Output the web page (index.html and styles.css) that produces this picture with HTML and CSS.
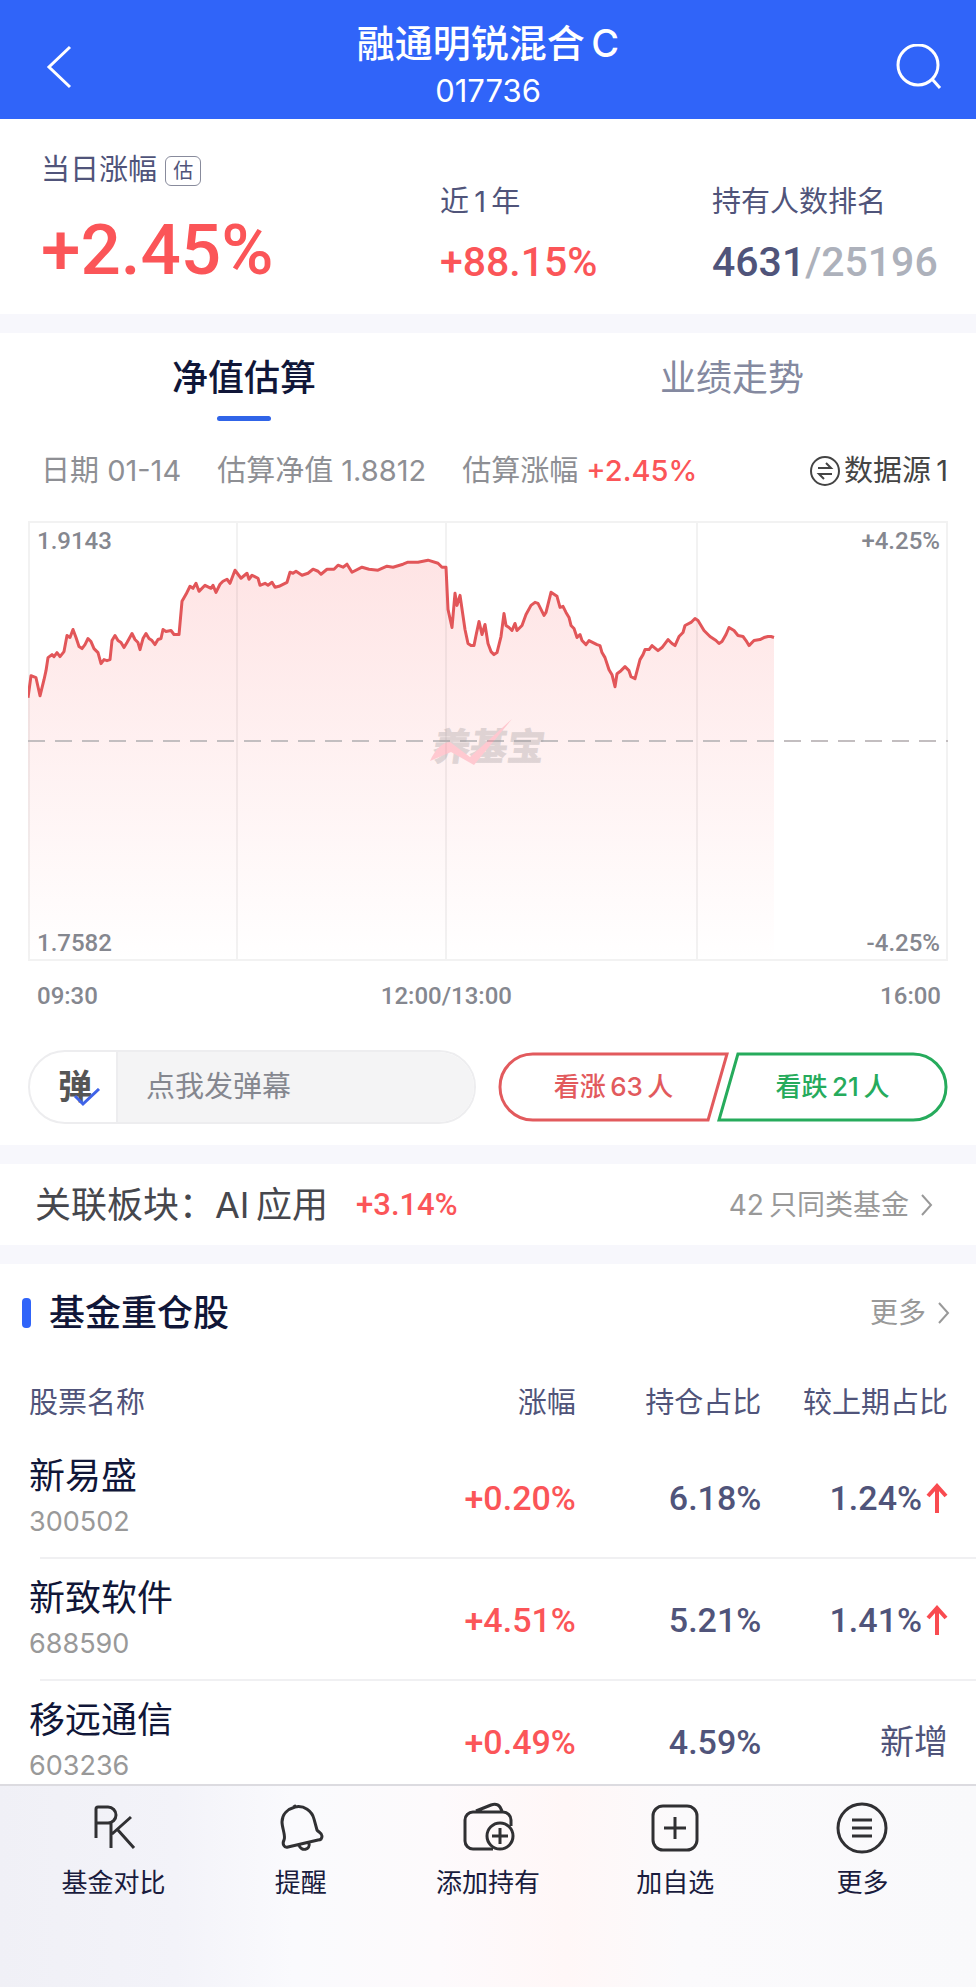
FILE: index.html
```
<!DOCTYPE html>
<html lang="zh-CN">
<head>
<meta charset="utf-8">
<meta name="viewport" content="width=device-width, initial-scale=1">
<title>融通明锐混合C</title>
<link rel="stylesheet" href="styles.css">
</head>
<body>

<header class="topbar">
  <button class="icon-btn back" aria-label="返回">
    <svg width="28" height="44" viewBox="0 0 28 44"><path d="M24 2 L3 22 L24 42"/></svg>
  </button>
  <div class="title">
    <h1>融通明锐混合&thinsp;C</h1>
    <p>017736</p>
  </div>
  <button class="icon-btn" aria-label="搜索">
    <svg width="46" height="46" viewBox="0 0 46 46"><circle cx="22" cy="21" r="20"/><path d="M36 35 L44 44"/></svg>
  </button>
</header>

<main>
<section class="stats">
  <div class="stat">
    <p class="label">当日涨幅 <span class="badge">估</span></p>
    <p class="num big up">+2.45%</p>
  </div>
  <div class="stat">
    <p class="label">近&thinsp;1&thinsp;年</p>
    <p class="num up">+88.15%</p>
  </div>
  <div class="stat">
    <p class="label">持有人数排名</p>
    <p class="num rank">4631<span>/25196</span></p>
  </div>
</section>

<section class="estimate">
  <nav class="tabs">
    <button class="tab active">净值估算</button>
    <button class="tab">业绩走势</button>
  </nav>

  <div class="info">
    <span>日期 01-14</span>
    <span>估算净值 1.8812</span>
    <span>估算涨幅 <b class="up">+2.45%</b></span>
    <button class="source">
      <svg width="32" height="32" viewBox="0 0 32 32"><circle cx="16" cy="16" r="14"/><path d="M9 13 H22 L17 8 M23 19 H10 L15 24"/></svg>数据源&thinsp;1
    </button>
  </div>

  <div class="chart">
    <svg class="plot" viewBox="0 0 920 438" preserveAspectRatio="none">
      <defs>
        <linearGradient id="fade" x1="0" y1="0" x2="0" y2="1">
          <stop offset="0" stop-color="#fb5558" stop-opacity=".16"/>
          <stop offset="1" stop-color="#fb5558" stop-opacity="0"/>
        </linearGradient>
      </defs>
      <path class="area" id="area" fill="url(#fade)"/>
      <path class="grid" d="M1 1 H919 V437 H1 Z M209 1 V437 M418 1 V437 M669 1 V437"/>
      <path class="zero" d="M0 219 H920"/>
      <path class="line" id="line"/>
    </svg>
    <svg class="mark" width="126" height="56" viewBox="0 0 126 56">
      <text x="10" y="45" transform="skewX(-8)">养基宝</text>
      <path d="M2 46 Q10 28 22 27 L42 42 L84 4 L46 50 L23 37 Z"/>
    </svg>
    <span class="num tl">1.9143</span>
    <span class="num tr">+4.25%</span>
    <span class="num bl">1.7582</span>
    <span class="num br">-4.25%</span>
  </div>
  <div class="times num">
    <span>09:30</span><span>12:00/13:00</span><span>16:00</span>
  </div>

  <div class="actions">
    <div class="danmu">
      <button class="danmu-btn" aria-label="弹幕开关">弹<svg width="28" height="20" viewBox="0 0 28 20"><path d="M2 8 L10 16 L26 1"/></svg></button>
      <input type="text" aria-label="发弹幕" placeholder="点我发弹幕">
    </div>
    <div class="vote">
      <button class="vote-up">
        <svg viewBox="0 0 232 70" preserveAspectRatio="none"><path d="M35 2 H230 L211 68 H35 A33 33 0 0 1 35 2 Z"/></svg>
        <span>看涨&thinsp;63&thinsp;人</span>
      </button>
      <button class="vote-down">
        <svg viewBox="0 0 232 70" preserveAspectRatio="none"><path d="M21 2 H197 A33 33 0 0 1 197 68 H2 Z"/></svg>
        <span>看跌&thinsp;21&thinsp;人</span>
      </button>
    </div>
  </div>
</section>

<section class="related">
  <h2>关联板块：<span>AI&thinsp;应用</span></h2>
  <span class="num up">+3.14%</span>
  <a class="more" href="#">42&thinsp;只同类基金<svg width="12" height="24" viewBox="0 0 12 24"><path d="M1 2 L10 12 L1 22"/></svg></a>
</section>

<section class="holdings">
  <div class="holdings-head">
    <h2>基金重仓股</h2>
    <a class="more" href="#">更多<svg width="12" height="24" viewBox="0 0 12 24"><path d="M1 2 L10 12 L1 22"/></svg></a>
  </div>
  <table>
    <thead>
      <tr><th>股票名称</th><th>涨幅</th><th>持仓占比</th><th>较上期占比</th></tr>
    </thead>
    <tbody>
      <tr>
        <td><p class="name">新易盛</p><p class="code">300502</p></td>
        <td class="num up">+0.20%</td>
        <td class="num">6.18%</td>
        <td class="num">1.24%<svg class="arrow" width="22" height="30" viewBox="0 0 22 30"><path d="M11 30 V3 M2 13 L11 3 L20 13"/></svg></td>
      </tr>
      <tr>
        <td><p class="name">新致软件</p><p class="code">688590</p></td>
        <td class="num up">+4.51%</td>
        <td class="num">5.21%</td>
        <td class="num">1.41%<svg class="arrow" width="22" height="30" viewBox="0 0 22 30"><path d="M11 30 V3 M2 13 L11 3 L20 13"/></svg></td>
      </tr>
      <tr>
        <td><p class="name">移远通信</p><p class="code">603236</p></td>
        <td class="num up">+0.49%</td>
        <td class="num">4.59%</td>
        <td class="new">新增</td>
      </tr>
    </tbody>
  </table>
</section>
</main>

<nav class="bottombar">
  <a href="#">
    <svg width="52" height="52" viewBox="0 0 52 52"><path d="M8 36 V7 Q8 5 10 5 H20 A8 8 0 0 1 20 21 H8 M23 21 V46 M43 15 L24 32 M29 27 L46 46"/></svg>
    基金对比
  </a>
  <a href="#">
    <svg width="52" height="52" viewBox="0 0 52 52"><path d="M9 38 C11 34 7 26 7 20 C7 12 13 7 20 5 C29 3 37 9 39 17 L42 28 C43 30 47 31 47 34 C47 37 45 38 43 38 L13 45 C9 46 7 42 9 38 Z M24 43 C26 50 36 48 34 41 M20 5 L19 3"/></svg>
    提醒
  </a>
  <a href="#">
    <svg width="54" height="52" viewBox="0 0 54 52"><path d="M32 47 H12 A8 8 0 0 1 4 39 V18 A8 8 0 0 1 12 10 H42 A8 8 0 0 1 50 18 V24 M15 9 L30 3 Q36 1 39 5 L41 9"/><circle cx="39" cy="34" r="13"/><path d="M31 34 H47 M39 26 V42"/></svg>
    添加持有
  </a>
  <a href="#">
    <svg width="52" height="52" viewBox="0 0 52 52"><rect x="4" y="4" width="44" height="44" rx="10"/><path d="M15 26 H37 M26 15 V37"/></svg>
    加自选
  </a>
  <a href="#">
    <svg width="52" height="52" viewBox="0 0 52 52"><circle cx="26" cy="26" r="24"/><path d="M16 18 H36 M16 26 H36 M16 34 H36"/></svg>
    更多
  </a>
</nav>

<script>
// x,y pairs inside the 920x438 plot
var points = [
  0,176, 3,154, 8,156, 12,174, 16,158, 18,149, 20,136, 24,133, 26,135, 29,131, 32,135, 36,130, 39,114, 42,116, 45,108, 48,116, 51,125, 54,127, 57,123, 60,117, 63,120, 66,127, 70,131, 73,142, 76,138, 79,139, 82,138, 84,119, 87,114, 90,119, 93,121, 96,126, 99,121, 104,112, 107,118, 110,121, 112,128, 115,117, 118,112, 121,117, 124,119, 127,123, 130,118, 133,117, 135,108, 138,110, 143,109, 146,113, 151,113, 154,80, 158,73, 162,65, 165,67, 168,62, 171,70, 177,64, 183,67, 185,64, 188,71, 192,63, 195,60, 199,58, 202,62, 207,49, 213,57, 219,52, 221,58, 224,54, 230,57, 232,64, 237,62, 240,64, 244,61, 247,66, 251,65, 259,61, 262,51, 265,52, 268,50, 274,54, 280,52, 285,48, 290,50, 293,53, 299,48, 306,48, 310,44, 315,46, 319,43, 324,51, 334,46, 341,48, 350,49, 359,45, 365,46, 375,43, 380,41, 390,41, 400,39, 410,42, 414,46,
  418,46, 420,88, 424,106, 427,72, 429,84, 432,74, 437,108, 440,122, 443,124, 446,124, 448,114, 451,100, 454,113, 457,103, 460,122, 463,130, 466,133, 469,131, 473,115, 476,92, 478,104, 481,106, 484,109, 487,102, 489,109, 494,104, 498,93, 503,84, 507,81, 510,82, 516,94, 518,91, 523,71, 529,75, 532,86, 535,85, 538,91, 541,96, 543,104, 546,107, 549,116, 552,113, 554,119, 558,123, 561,119, 569,123, 572,124, 574,131, 577,136, 581,148, 584,153, 587,165, 589,152, 593,149, 597,145, 601,149, 603,155, 607,157, 612,138, 615,133, 617,128, 621,128, 624,124, 630,129, 634,126, 640,118, 644,122, 647,124, 651,115, 655,111, 657,104, 663,101, 667,97, 670,99, 676,109, 682,115, 688,119, 691,122, 694,120, 698,113, 701,106, 706,109, 710,114, 715,115, 718,119, 721,124, 726,119, 732,118, 736,116, 740,115, 743,115, 746,116
];
var d = "";
for (var i = 0; i < points.length; i += 2) {
  d += (i ? "L" : "M") + points[i] + " " + points[i + 1];
}
document.getElementById("line").setAttribute("d", d);
document.getElementById("area").setAttribute("d", d + "V438H0Z");
</script>

</body>
</html>
```
FILE: styles.css
```
* {
  box-sizing: border-box;
}

body {
  margin: 0;
  height: 100vh;
  display: flex;
  flex-direction: column;
  background: #fff;
  color: #50547a;
  font-family: Inter, "Noto Sans CJK SC", sans-serif;
  font-size: 29px;
  line-height: 36px;
}

h1, h2, p {
  margin: 0;
  font-weight: 400;
}

button {
  padding: 0;
  border: 0;
  background: none;
  color: inherit;
  font: inherit;
  cursor: pointer;
}

a {
  color: inherit;
  text-decoration: none;
}

svg {
  fill: none;
  stroke: currentColor;
}

/* list scrolls under the toolbar */
main {
  flex: 1;
  min-height: 0;
  overflow-y: auto;
  scrollbar-width: none;
}

.num {
  font-family: Roboto, sans-serif;
  font-weight: 500;
}

.up {
  color: #fb5558;
}

/* header */
.topbar {
  display: flex;
  align-items: center;
  justify-content: space-between;
  height: 119px;
  padding: 14px 32px 0;
  background: #3064f9;
  color: #fff;
}

.icon-btn {
  display: flex;
  width: 48px;
  stroke-width: 3;
}

.back {
  padding-left: 14px;
}

.title {
  text-align: center;
}

.title h1 {
  font-size: 38px;
  line-height: 48px;
  font-weight: 500;
}

.title p {
  font-size: 31px;
  line-height: 48px;
}

/* today / one year / rank */
.stats {
  display: grid;
  grid-template-columns: 399fr 272fr 228fr;
  align-items: end;
  height: 195px;
  padding: 0 36px 24px 41px;
}

.stat .num {
  font-size: 41px;
  line-height: 56px;
  margin-top: 14px;
}

.stat .big {
  font-size: 71px;
  line-height: 80px;
  margin-top: 22px;
}

.badge {
  display: inline-block;
  padding: 0 7px;
  border: 1px solid #888b9c;
  border-radius: 6px;
  font-size: 20px;
  line-height: 28px;
  vertical-align: 2px;
}

.rank {
  white-space: nowrap;
}

.rank span {
  color: #adb1bb;
}

/* estimate section */
.estimate {
  border-top: 19px solid #f7f7fc;
  padding-bottom: 21px;
}

.tabs {
  display: grid;
  grid-template-columns: 1fr 1fr;
}

.tab {
  display: flex;
  flex-direction: column;
  align-items: center;
  padding-top: 21px;
  color: #8489a0;
  font-size: 36px;
  line-height: 48px;
}

.tab::after {
  content: "";
  width: 54px;
  height: 5px;
  margin-top: 14px;
  border-radius: 3px;
}

.active {
  color: #101638;
  font-weight: 500;
}

.active::after {
  background: #3064e8;
}

.info {
  display: flex;
  gap: 36px;
  padding: 32px 28px 32px 41px;
  color: #8e8f94;
  white-space: nowrap;
}

.info b {
  font-weight: 500;
}

.source {
  display: flex;
  align-items: center;
  gap: 3px;
  margin-left: auto;
  color: #444;
}

.source svg {
  stroke-width: 2;
}

.chart {
  position: relative;
  margin: 0 28px;
  height: 440px;
  color: #85878f;
}

.plot {
  display: block;
  width: 100%;
  height: 100%;
}

.area {
  stroke: none;
}

.grid {
  stroke: #000;
  stroke-opacity: .05;
  stroke-width: 2;
}

.zero {
  stroke: #c3bec0;
  stroke-width: 2;
  stroke-dasharray: 17 10;
}

.line {
  stroke: #e25659;
  stroke-width: 3;
  stroke-linejoin: round;
}

.mark {
  position: absolute;
  left: 400px;
  top: 194px;
  opacity: .35;
}

.mark text {
  fill: #a49ea0;
  stroke: #a49ea0;
  stroke-width: 1;
  font: 700 37px "Noto Sans CJK SC", sans-serif;
}

.mark path {
  fill: #ff8095;
  stroke: none;
}

.chart .num {
  position: absolute;
  font-size: 24px;
  line-height: 32px;
}

.tl, .bl {
  left: 9px;
}

.tr, .br {
  right: 8px;
}

.tl, .tr {
  top: 4px;
}

.bl, .br {
  bottom: 2px;
}

/* middle label sits under the lunch break line */
.times {
  display: grid;
  grid-template-columns: 347fr auto 433fr;
  padding: 19px 35px 0 37px;
  color: #85878f;
  font-size: 24px;
  line-height: 32px;
}

.times span:last-child {
  text-align: right;
}

.actions {
  display: flex;
  gap: 22px;
  padding: 38px 28px 0;
}

.danmu {
  flex: 446;
  display: flex;
  min-width: 0;
  height: 74px;
  border: 2px solid #ededef;
  border-radius: 37px;
  overflow: hidden;
}

.danmu-btn {
  position: relative;
  width: 88px;
  padding-left: 4px;
  border-right: 2px solid #ededef;
  color: #555;
  font-size: 34px;
  font-weight: 700;
}

.danmu-btn svg {
  position: absolute;
  left: 43px;
  top: 36px;
  stroke: #3f63e8;
  stroke-width: 3;
}

.danmu input {
  flex: 1;
  min-width: 0;
  padding: 0 28px;
  border: 0;
  background: #f4f4f5;
  font: inherit;
}

.danmu input::placeholder {
  color: #85878f;
}

.vote {
  flex: 452;
  display: flex;
  height: 70px;
  margin-top: 2px;
  font-size: 26px;
  font-weight: 500;
}

.vote button {
  position: relative;
  flex: 1;
}

.vote button + button {
  margin-left: -12px;
}

.vote svg {
  position: absolute;
  inset: 0;
  width: 100%;
  height: 100%;
  stroke-width: 3;
}

.vote-up {
  color: #e25a5d;
}

.vote-down {
  color: #26ab5c;
}

/* related sector */
.related {
  display: flex;
  align-items: center;
  height: 119px;
  padding: 0 43px 0 35px;
  border: solid #f7f7fc;
  border-width: 19px 0;
}

.related h2 {
  color: #46474d;
  font-size: 36px;
}

.related .num {
  margin-left: 28px;
  font-size: 31px;
}

.more {
  display: flex;
  align-items: center;
  gap: 12px;
  margin-left: auto;
  color: #999;
  font-size: 28px;
}

.more svg {
  stroke-width: 2;
}

/* holdings */
.holdings-head {
  display: flex;
  align-items: center;
  padding: 25px 26px 0 22px;
}

.holdings-head h2 {
  display: flex;
  align-items: center;
  gap: 18px;
  color: #101638;
  font-size: 36px;
  line-height: 48px;
  font-weight: 500;
}

.holdings-head h2::before {
  content: "";
  width: 9px;
  height: 30px;
  border-radius: 4px;
  background: #3064f9;
}

table {
  width: 100%;
  border-collapse: collapse;
  table-layout: fixed;
}

th, td {
  padding: 0;
  text-align: right;
  font-weight: 400;
}

th:first-child, td:first-child {
  width: 40%;
  padding-left: 29px;
  text-align: left;
}

th:last-child, td:last-child {
  width: 22%;
  padding-right: 28px;
}

th {
  padding-top: 48px;
  height: 98px;
  vertical-align: top;
}

tbody td {
  height: 122px;
  padding-top: 4px;
}

tbody tr + tr {
  background: linear-gradient(#f0f0f2, #f0f0f2) 40px 0 / 100% 2px no-repeat;
}

td.num {
  font-size: 34px;
}

.name {
  color: #101638;
  font-size: 36px;
  line-height: 48px;
}

.code {
  color: #999;
  font-size: 27px;
  line-height: 44px;
}

.arrow {
  margin-left: 4px;
  vertical-align: -3px;
  stroke: #f94b50;
  stroke-width: 4;
}

.new {
  font-size: 34px;
}

/* bottom toolbar */
.bottombar {
  display: grid;
  grid-template-columns: repeat(5, 1fr);
  height: 203px;
  padding: 16px 20px 0;
  border-top: 2px solid #dcdbe0;
  background: linear-gradient(90deg, #f0f0f6 0%, #f3f3f9 18%, #fafafd 30%, #fdfafc 45%, #fff7f7 58%, #fbfafc 70%, #f9f9fb 100%);
  color: #1a1c3e;
  font-size: 26px;
}

.bottombar a {
  display: flex;
  flex-direction: column;
  align-items: center;
  gap: 11px;
}

.bottombar svg {
  stroke: #303033;
  stroke-width: 3;
  stroke-linejoin: round;
}
```
